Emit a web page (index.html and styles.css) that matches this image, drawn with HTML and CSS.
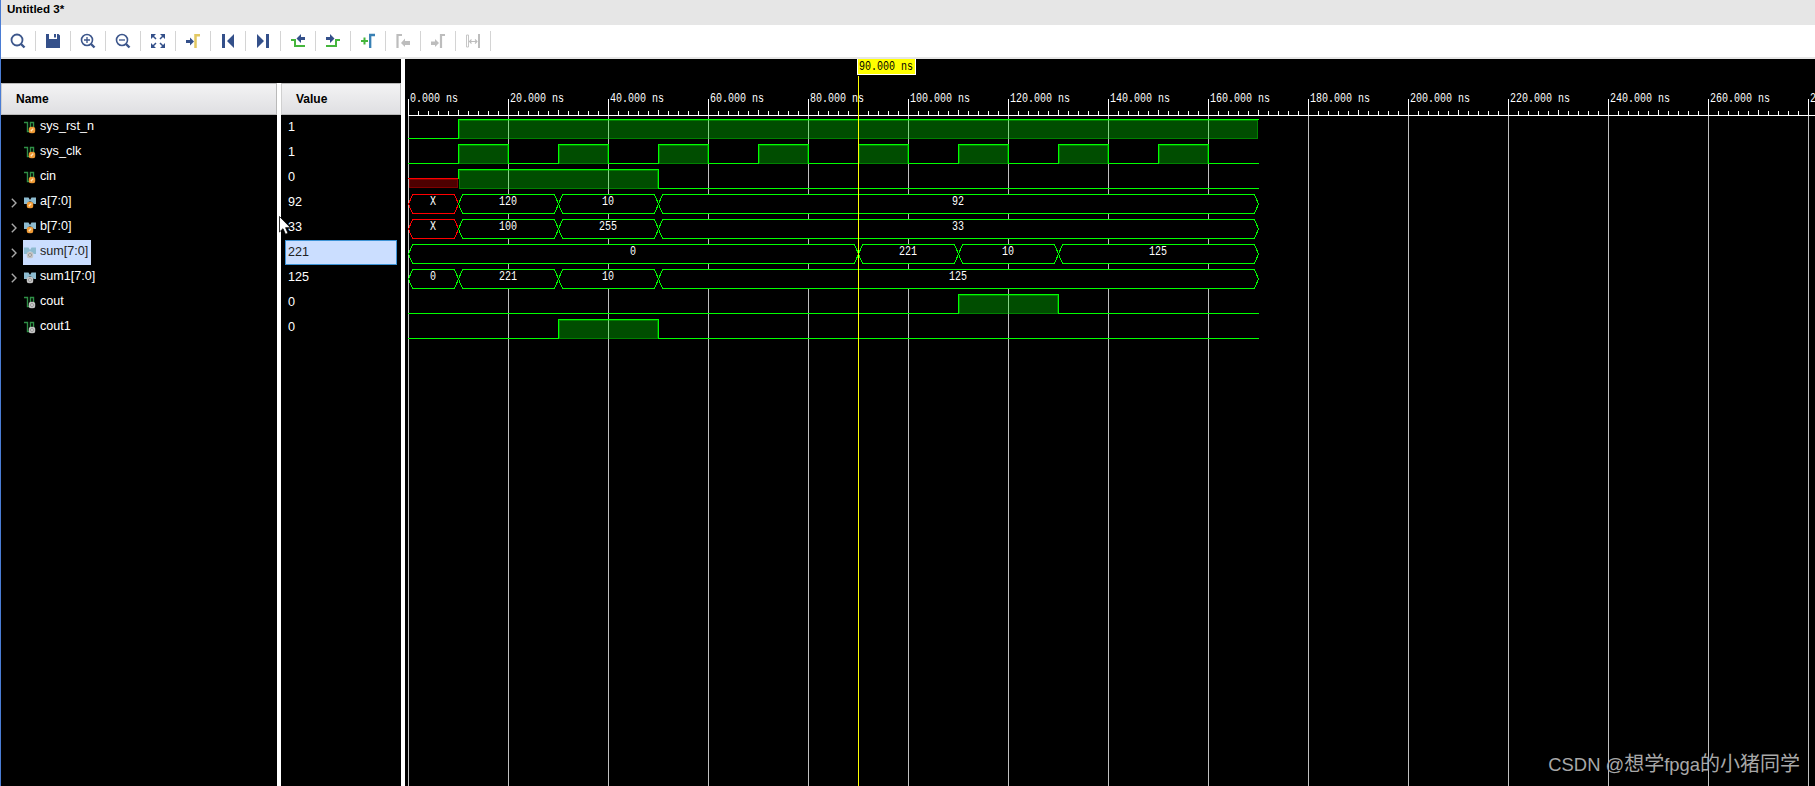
FILE: index.html
```html
<!DOCTYPE html>
<html lang="en">
<head>
  <meta charset="UTF-8" />
  <meta name="viewport" content="width=device-width, initial-scale=1.0"/>
  <title>Untitled 3*</title>
  <link rel="stylesheet" href="styles.css">
</head>
<body>

  <!-- Icon shapes used in the signal list -->
  <svg class="defs" width="0" height="0">
    <symbol id="wire" viewBox="0 0 12 13">
      <path d="M0 1.500H3.500V10.500H6.500V1.500H9.500V9" fill="none" stroke="#2f8f46" stroke-width="1.400"/>
    </symbol>
    <symbol id="bus" viewBox="0 0 12 13">
      <path d="M0 1.500H4.500L6 4L7.500 1.500H12V8H10L7 5.500H5L3 8H0Z" fill="#8dbbd0"/>
    </symbol>
    <symbol id="badge-in" viewBox="0 0 6 6">
      <circle cx="3" cy="3" r="3" fill="#f09a35"/>
      <path d="M2 4L4 1.800" stroke="#ffe6bd" stroke-width="1.2"/>
    </symbol>
    <symbol id="badge-out" viewBox="0 0 6 6">
      <circle cx="3" cy="3" r="3" fill="#c4c4c4"/>
      <circle cx="3" cy="3" r="1.2" fill="#f4f4f4" stroke="#8a8a8a" stroke-width=".8"/>
    </symbol>
  </svg>

  <div class="window">
    <div class="title">Untitled 3*</div>

    <div class="toolbar">
      <div class="tool"><svg viewBox="0 0 16 16"><circle cx="7" cy="7" r="5.500" fill="none" stroke="#3c568b" stroke-width="1.8"/><path d="M11 11L14.500 14.500" stroke="#3c568b" stroke-width="2.400"/></svg></div>
      <div class="tool"><svg viewBox="0 0 16 16"><path d="M1 1H4V6H12V1H13.500L15 2.500V15H1Z" fill="#34508a"/><path d="M9 1H11V4.500H9Z" fill="#34508a"/></svg></div>
      <div class="tool"><svg viewBox="0 0 16 16"><circle cx="7" cy="7" r="5.500" fill="none" stroke="#3c568b" stroke-width="1.600"/><path d="M11 11L14.500 14.500" stroke="#3c568b" stroke-width="2.400"/><path d="M4 7H10M7 4V10" stroke="#3c568b" stroke-width="1.300"/></svg></div>
      <div class="tool"><svg viewBox="0 0 16 16"><circle cx="7" cy="7" r="5.500" fill="none" stroke="#3c568b" stroke-width="1.600"/><path d="M11 11L14.500 14.500" stroke="#3c568b" stroke-width="2.400"/><path d="M4 7H10" stroke="#3c568b" stroke-width="1.300"/></svg></div>
      <div class="tool"><svg viewBox="0 0 16 16"><path d="M1 1H6L1 6ZM10 1H15V6ZM1 10V15H6ZM15 10V15H10Z" fill="#34508a"/><path d="M3 3L6 6M13 3L10 6M3 13L6 10M13 13L10 10" stroke="#34508a" stroke-width="1.500"/></svg></div>
      <div class="tool"><svg viewBox="0 0 16 16"><path d="M1 7H5V4.500L9 8.500L5 12.500V10H1Z" fill="#34508a"/><path d="M10.500 15V2.200H15" fill="none" stroke="#e2c862" stroke-width="2.500"/></svg></div>
      <div class="tool"><svg viewBox="0 0 16 16"><path d="M2 1H5V15H2ZM14 1V15L7 8Z" fill="#34508a"/></svg></div>
      <div class="tool"><svg viewBox="0 0 16 16"><path d="M11 1H14V15H11ZM2 1V15L9 8Z" fill="#34508a"/></svg></div>
      <div class="tool"><svg viewBox="0 0 16 16"><path d="M1 7H5V13H15" fill="none" stroke="#45b63c" stroke-width="2"/><path d="M15 4H11V1L6.500 5.500L11 10V7H15Z" fill="#34508a"/></svg></div>
      <div class="tool"><svg viewBox="0 0 16 16"><path d="M15 7H11V13H1" fill="none" stroke="#45b63c" stroke-width="2"/><path d="M1 4H5V1L9.500 5.500L5 10V7H1Z" fill="#34508a"/></svg></div>
      <div class="tool"><svg viewBox="0 0 16 16"><path d="M1 8H8M4.500 4.500V11.500" stroke="#45b63c" stroke-width="2"/><path d="M10.200 15V2H15" fill="none" stroke="#3880b4" stroke-width="2.300"/></svg></div>
      <div class="tool"><svg viewBox="0 0 16 16"><path d="M2.500 15V2H7" fill="none" stroke="#bdbdbd" stroke-width="2.200"/><path d="M15 8H10V5.500L6 10L10 14V12H15Z" fill="#bdbdbd"/></svg></div>
      <div class="tool"><svg viewBox="0 0 16 16"><path d="M1 8.500H5V6L9 10L5 14V12H1Z" fill="#bdbdbd"/><path d="M11 15V2H15" fill="none" stroke="#bdbdbd" stroke-width="2.200"/></svg></div>
      <div class="tool"><svg viewBox="0 0 16 16"><path d="M1.500 2H3.500V14H1.500Z" fill="none" stroke="#c6c6c6"/><path d="M13 1H15V15H13Z" fill="#bdbdbd"/><path d="M4.500 8.500H12M6.500 6.500L4.500 8.500L6.500 10.500M10 6.500L12 8.500L10 10.500" fill="none" stroke="#bdbdbd" stroke-width="1.100"/></svg></div>
    </div>

    <div class="main">
      <div class="signals">
        <div class="spacer"></div>
        <div class="columns">
          <div class="names">
            <div class="col-head">Name</div>
            <div id="nameList"></div>
          </div>
          <div class="values">
            <div class="col-head">Value</div>
            <div id="valueList"></div>
          </div>
        </div>
      </div>
      <div class="waves">
        <svg id="wave" width="1410" height="727"></svg>
      </div>
    </div>

    <svg class="pointer" viewBox="0 0 12 19"><path d="M.5 .5V16L4 12.700L6.500 18.300L9 17.200L6.600 11.700H11.500Z" fill="#fff" stroke="#000" stroke-width=".8"/></svg>
    <div class="watermark"><span class="latin">CSDN @</span>想学<span class="latin">fpga</span>的小猪同学</div>
  </div>

  <script>
    const END = 170;

    // levels: [start ns, value], value is 0, 1 or 'X' for wires
    const signals = [
      { name: 'sys_rst_n', value: '1', type: 'wire', dir: 'in', data: [[0, 0], [10, 1]] },
      { name: 'sys_clk', value: '1', type: 'wire', dir: 'in', data: [[0, 0]] },
      { name: 'cin', value: '0', type: 'wire', dir: 'in', data: [[0, 'X'], [10, 1], [50, 0]] },
      { name: 'a[7:0]', value: '92', type: 'bus', dir: 'in', data: [[0, 'X'], [10, 120], [30, 10], [50, 92]] },
      { name: 'b[7:0]', value: '33', type: 'bus', dir: 'in', data: [[0, 'X'], [10, 100], [30, 255], [50, 33]] },
      { name: 'sum[7:0]', value: '221', type: 'bus', dir: 'out', selected: true, data: [[0, 0], [90, 221], [110, 10], [130, 125]] },
      { name: 'sum1[7:0]', value: '125', type: 'bus', dir: 'out', data: [[0, 0], [10, 221], [30, 10], [50, 125]] },
      { name: 'cout', value: '0', type: 'wire', dir: 'out', data: [[0, 0], [110, 1], [130, 0]] },
      { name: 'cout1', value: '0', type: 'wire', dir: 'out', data: [[0, 0], [30, 1], [50, 0]] }
    ];

    // Clock toggles every 10ns
    for (let t = 10; t < END; t += 10) {
      signals[1].data.push([t, (t / 10) % 2]);
    }

    // Signal list
    const nameList = document.getElementById("nameList");
    const valueList = document.getElementById("valueList");
    signals.forEach(s => {
      const sel = s.selected ? ' selected' : '';
      const arrow = s.type === 'bus' ? '<svg class="arrow" viewBox="0 0 6 10"><path d="M.8 .8L5 5L.8 9.200"/></svg>' : '';
      nameList.innerHTML += `
        <div class="row">
          <div class="expand">${arrow}</div>
          <div class="name${sel}">
            <svg class="sig-icon" viewBox="0 0 12 13">
              <use href="#${s.type}" width="12" height="13"/>
              <use href="#badge-${s.dir}" x="${s.type === 'bus' ? 2.5 : 4.5}" y="5.5" width="7" height="7"/>
            </svg>
            <span>${s.name}</span>
          </div>
        </div>`;
      valueList.innerHTML += `<div class="value${sel}">${s.value}</div>`;
    });

    // Time to pixel column inside the wave area
    function px(t) {
      return 3 + t * 5;
    }

    function text(x, y, str, cls) {
      const w = String(str).length * 6;
      return `<text class="${cls}" x="${x}" y="${y}" textLength="${w}" lengthAdjust="spacingAndGlyphs">${str}</text>`;
    }

    function rect(x, y, w, h, cls) {
      return `<rect class="${cls}" x="${x}" y="${y}" width="${w}" height="${h}"/>`;
    }

    function drawRuler() {
      let out = rect(3, 56, 1407, 1, 'tick');
      for (let t = 0; t <= 280; t += 2) {
        const x = px(t);
        if (t % 20 === 0) {
          out += rect(x, 40, 1, 16, 'tick') + rect(x, 57, 1, 670, 'grid');
          out += text(x + 2, 43, t + '.000 ns', 'label');
        } else {
          const h = t % 10 === 0 ? 5 : 4;
          out += rect(x, 56 - h, 1, h, 'tick');
        }
      }
      return out;
    }

    function drawWire(s, top) {
      let out = '';
      let prev = null;
      const level = { 0: top + 19, 1: top, X: top + 9 };
      s.data.forEach(([t, v], i) => {
        const last = i === s.data.length - 1;
        const x0 = px(t);
        const x1 = px(last ? END : s.data[i + 1][0]);
        const cls = v === 'X' ? 'unknown' : 'green';
        const y = level[v];
        if (v !== 0) {
          const h = top + (v === 'X' ? 18 : 19) - y;
          out += rect(x0 + 1, y + 1, x1 - x0 - 1, h, cls + ' fill');
          out += `<rect class="${cls} inner" x="${x0 + 1.5}" y="${y + 1.5}" width="${x1 - x0 - 2}" height="${h - 1}"/>`;
        }
        out += rect(x0, y, x1 - x0 + (v === 'X' ? 0 : 1), 1, cls);
        if (prev !== null) {
          out += rect(x0, Math.min(prev, y), 1, Math.abs(prev - y) + 1, 'green');
        }
        prev = y;
      });
      return out;
    }

    function drawBus(s, top) {
      let out = '';
      s.data.forEach(([t, v], i) => {
        const a = px(t) + 0.5;
        const b = px(i === s.data.length - 1 ? END : s.data[i + 1][0]) + 0.5;
        const y = top + 0.5;
        out += `<polygon class="bus${v === 'X' ? ' bad' : ''}" points="${a},${y + 9.5} ${a + 4},${y} ${b - 4},${y} ${b},${y + 9.5} ${b - 4},${y + 19} ${a + 4},${y + 19}"/>`;
        out += text(Math.floor((a + b) / 2 - String(v).length * 3), top + 11, v, 'label');
      });
      return out;
    }

    let svg = drawRuler();
    signals.forEach((s, i) => {
      const top = 60 + i * 25;
      svg += s.type === 'bus' ? drawBus(s, top) : drawWire(s, top);
    });

    // Marker at 90ns
    svg += rect(px(90), 17, 1, 710, 'marker');
    svg += rect(px(90) - 1, 0, 59, 16, 'tick') + rect(px(90), 0, 57, 15, 'marker');
    svg += text(px(90) + 1, 11, '90.000 ns', 'label dark');

    document.getElementById("wave").innerHTML = svg;
  </script>

</body>
</html>
```
FILE: styles.css
```css
:root {
  --wave: #00ff00;
  --selected: #cbdeff;
}

* {
  box-sizing: border-box;
}

body {
  margin: 0;
  background: #000;
  font-family: "Liberation Sans", Arial, sans-serif;
  font-size: 12px;
  overflow: hidden;
}

.defs {
  position: absolute;
}

.window {
  position: relative;
  display: flex;
  flex-direction: column;
  height: 100vh;
  border-left: 1px solid #4a7cd4;
}

.title {
  height: 25px;
  padding: 0 6px;
  line-height: 17px;
  font-weight: bold;
  font-size: 11.6px;
  background: #e6e6e6;
}

.toolbar {
  display: flex;
  align-items: center;
  height: 34px;
  background: #fff;
  border-bottom: 2px solid #e6e6e6;
}

.tool {
  display: flex;
  align-items: center;
  justify-content: center;
  width: 35px;
  height: 20px;
  border-right: 1px solid #d4d4d4;
}

.tool svg {
  width: 16px;
  height: 16px;
}

.main {
  display: flex;
  flex: 1;
  min-height: 0;
}

/* Signal list */
.signals {
  display: flex;
  flex-direction: column;
  width: 404px;
  border-right: 4px solid #fff;
}

.spacer {
  height: 24px;
}

.columns {
  display: flex;
  flex: 1;
}

.names {
  width: 280px;
  border-right: 4px solid #fff;
}

.values {
  width: 120px;
}

.col-head {
  height: 32px;
  padding-left: 14px;
  line-height: 30px;
  font-weight: bold;
  background: linear-gradient(#f3f3f4, #dfdfe2);
  border: 1px solid #b9b9b9;
  border-left-color: #d0d0d0;
}

.row {
  display: flex;
  height: 25px;
}

.expand {
  display: flex;
  align-items: center;
  width: 22px;
  padding-left: 10px;
}

.arrow {
  width: 6px;
  height: 10px;
  fill: none;
  stroke: #a8a8a8;
  stroke-width: 1.4;
}

.name {
  display: flex;
  align-items: center;
  gap: 4px;
  padding: 0 3px 0 1px;
  line-height: 23px;
  font-size: 12.6px;
  color: #fff;
}

.name span {
  height: 25px;
}

.name.selected {
  background: var(--selected);
  color: #222;
}

.sig-icon {
  width: 12px;
  height: 13px;
}

.value {
  height: 25px;
  margin: 0 4px;
  padding-left: 2px;
  border: 1px solid transparent;
  line-height: 22px;
  font-size: 12.6px;
  color: #fff;
}

.value.selected {
  background: var(--selected);
  border-color: #3d93d6;
  color: #222;
}

/* Waveform */
.waves {
  flex: 1;
  overflow: hidden;
}

.waves svg {
  display: block;
  shape-rendering: crispEdges;
}

.tick {
  fill: #fff;
}

.grid {
  fill: #c0c0c0;
}

.marker {
  fill: #ffff00;
}

.label {
  font-family: "Liberation Mono", "Courier New", monospace;
  font-size: 12px;
  fill: #fff;
}

.label.dark {
  fill: #000;
}

.green {
  fill: var(--wave);
  stroke: var(--wave);
  stroke-width: 0;
}

.unknown {
  fill: #ff0000;
  stroke: #ff0000;
  stroke-width: 0;
}

.fill {
  fill-opacity: 0.3;
}

.inner {
  fill: none;
  stroke-width: 1;
  stroke-opacity: 0.3;
}

.bus {
  fill: #000;
  stroke: var(--wave);
}

.bus.bad {
  stroke: #ff0000;
}

.pointer {
  position: absolute;
  left: 278px;
  top: 216px;
  width: 12px;
  height: 19px;
}

.watermark {
  position: absolute;
  right: 15px;
  bottom: 6px;
  font-family: "Noto Sans CJK SC", sans-serif;
  font-size: 20px;
  line-height: 30px;
  color: #a8a8a8;
  white-space: nowrap;
}

.watermark .latin {
  font-family: "Liberation Sans", Arial, sans-serif;
  font-size: 18.4px;
}
```
